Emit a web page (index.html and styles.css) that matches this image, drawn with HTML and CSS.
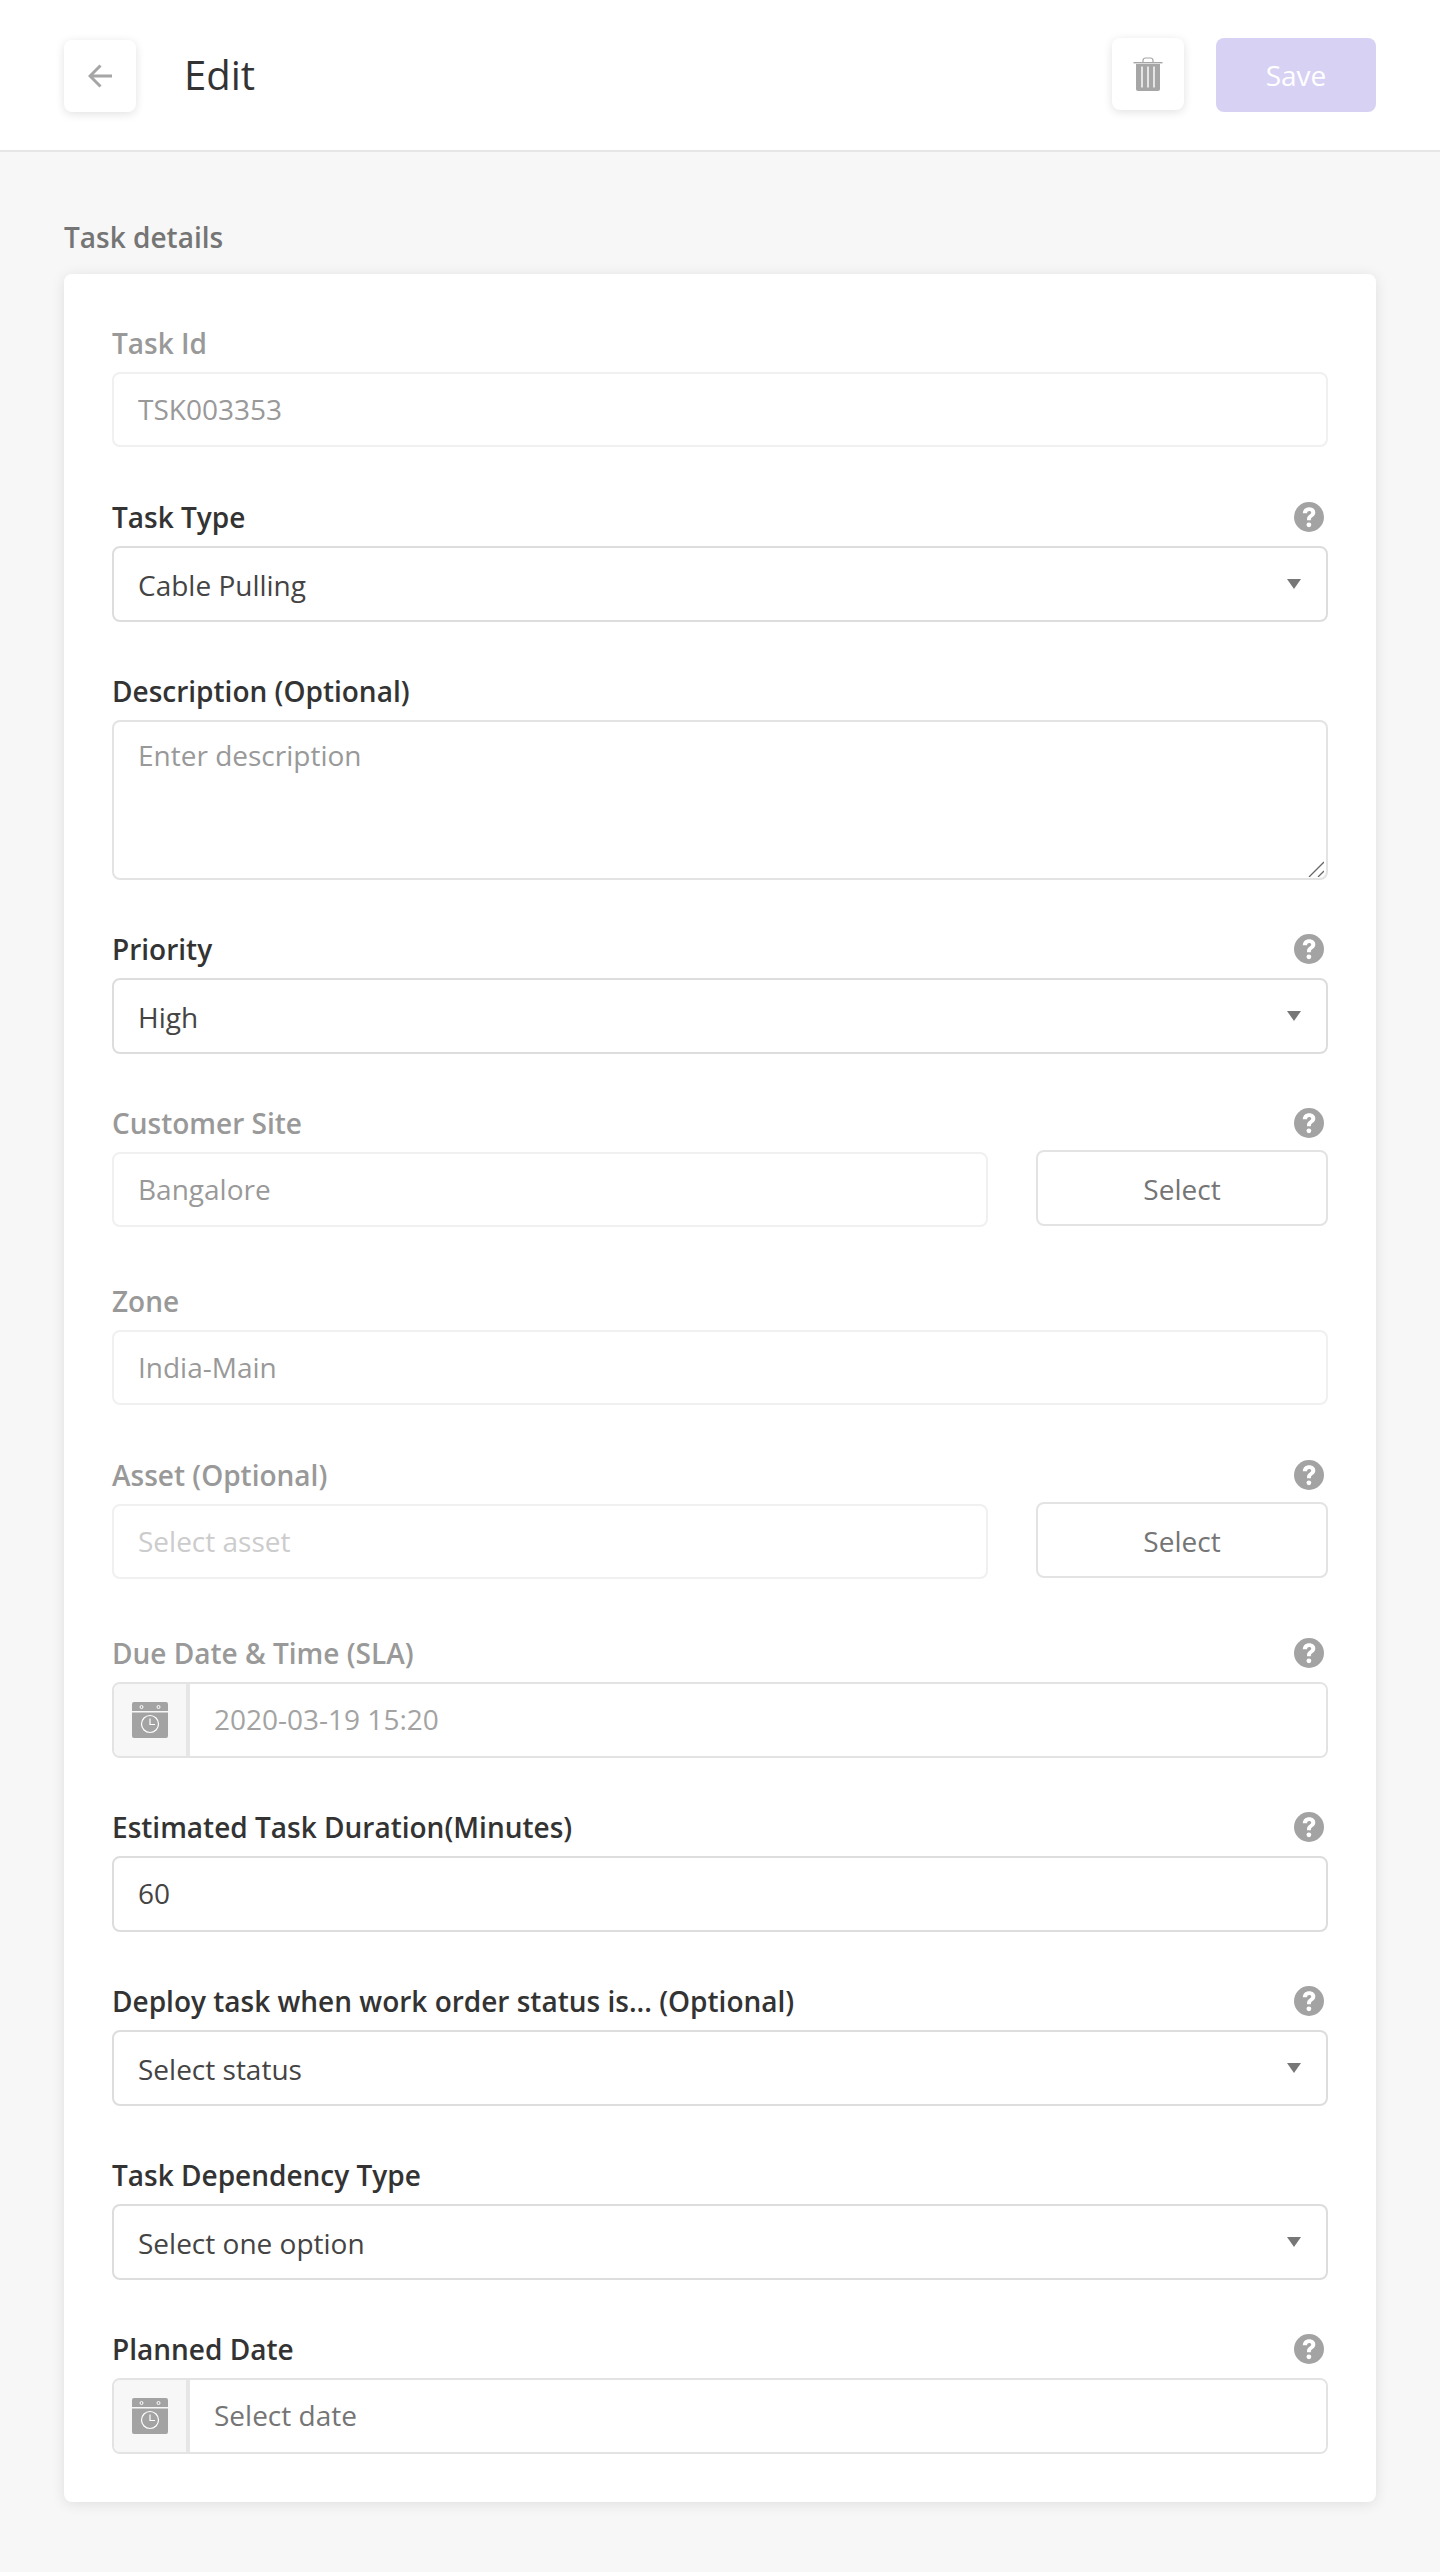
FILE: index.html
```html
<!DOCTYPE html>
<html lang="en">
<head>
<meta charset="utf-8">
<title>Edit</title>
<link rel="stylesheet" href="styles.css">
</head>
<body>
<svg class="sprites" width="0" height="0" aria-hidden="true">
  <symbol id="help" viewBox="0 0 30 30">
    <circle cx="15" cy="15" r="15" fill="#a3a3a3"/>
    <path d="M8.800 11.200c.2-3.800 2.900-5.900 6.400-5.900 3.600 0 6.100 2.100 6.100 5.100 0 2.300-1.300 3.500-2.800 4.600-1.300 1-1.600 1.500-1.600 2.700v.6h-3.900v-1c0-2.200.9-3.300 2.300-4.300 1.200-.9 1.900-1.500 1.900-2.400 0-1-.8-1.600-1.900-1.600-1.300 0-2.100.8-2.300 2.300z" fill="#fff"/>
    <circle cx="14.900" cy="22.800" r="2.400" fill="#fff"/>
  </symbol>
  <symbol id="calendar" viewBox="0 0 36 36">
    <path d="M2 0h32a2 2 0 0 1 2 2v7H0V2a2 2 0 0 1 2-2zM0 10.500h36V34a2 2 0 0 1-2 2H2a2 2 0 0 1-2-2z" fill="#a3a3a3"/>
    <circle cx="9.500" cy="5" r="1.500" fill="none" stroke="#fff" stroke-width="1"/>
    <circle cx="26.500" cy="5" r="1.500" fill="none" stroke="#fff" stroke-width="1"/>
    <circle cx="18" cy="22" r="8.500" fill="none" stroke="#fff" stroke-width="1.200"/>
    <path d="M18 16.500V22.500H23" fill="none" stroke="#fff" stroke-width="1.200"/>
  </symbol>
</svg>

<header class="topbar">
  <button class="icon-btn back-btn" type="button" aria-label="Back">
    <svg width="24" height="24" viewBox="0 0 24 24" fill="none" stroke="#a6a6a6" stroke-width="3">
      <path d="M24 12H2.500M12.500 1.500 2 12l10.500 10.500"/>
    </svg>
  </button>
  <h1 class="page-title">Edit</h1>
  <button class="icon-btn trash-btn" type="button" aria-label="Delete">
    <svg width="30" height="34" viewBox="0 0 30 34">
      <path d="M10 5V3.500A2.500 2.500 0 0 1 12.500 1h5A2.500 2.500 0 0 1 20 3.500V5" fill="none" stroke="#a6a6a6" stroke-width="1.200"/>
      <rect x="0.500" y="5" width="29" height="1.400" fill="#a6a6a6"/>
      <path d="M3 7h24v25a2 2 0 0 1-2 2H5a2 2 0 0 1-2-2z" fill="#a6a6a6"/>
      <path d="M9 9.500v21M15 9.500v21M21 9.500v21" stroke="#fff" stroke-width="1.400"/>
    </svg>
  </button>
  <button class="save-btn" type="button">Save</button>
</header>

<main class="content">
  <h2 class="section-title">Task details</h2>
  <form class="card">
    <div class="field">
      <div class="label-row is-disabled"><label>Task Id</label></div>
      <input class="control" type="text" value="TSK003353" disabled>
    </div>

    <div class="field">
      <div class="label-row"><label>Task Type</label><svg class="help"><use href="#help"/></svg></div>
      <div class="select-wrap"><select class="control"><option>Cable Pulling</option></select></div>
    </div>

    <div class="field">
      <div class="label-row"><label>Description (Optional)</label></div>
      <div class="area-wrap">
        <textarea class="control area" placeholder="Enter description"></textarea>
        <svg class="grip" width="16" height="16" viewBox="0 0 16 16" fill="none" stroke="#666" stroke-width="1.300" aria-hidden="true">
          <path d="M1 16 16 1M10 16l6-6"/>
        </svg>
      </div>
    </div>

    <div class="field">
      <div class="label-row"><label>Priority</label><svg class="help"><use href="#help"/></svg></div>
      <div class="select-wrap"><select class="control"><option>High</option></select></div>
    </div>

    <div class="field field-tall">
      <div class="label-row is-disabled"><label>Customer Site</label><svg class="help"><use href="#help"/></svg></div>
      <div class="pick-row">
        <input class="control" type="text" value="Bangalore" disabled>
        <button class="pick-btn" type="button">Select</button>
      </div>
    </div>

    <div class="field">
      <div class="label-row is-disabled"><label>Zone</label></div>
      <input class="control" type="text" value="India-Main" disabled>
    </div>

    <div class="field field-tall">
      <div class="label-row is-disabled"><label>Asset (Optional)</label><svg class="help"><use href="#help"/></svg></div>
      <div class="pick-row">
        <input class="control faint" type="text" placeholder="Select asset" disabled>
        <button class="pick-btn" type="button">Select</button>
      </div>
    </div>

    <div class="field">
      <div class="label-row is-disabled"><label>Due Date &amp; Time (SLA)</label><svg class="help"><use href="#help"/></svg></div>
      <div class="date-group">
        <span class="date-addon"><svg class="cal"><use href="#calendar"/></svg></span>
        <input class="date-input" type="text" value="2020-03-19 15:20" disabled>
      </div>
    </div>

    <div class="field">
      <div class="label-row"><label>Estimated Task Duration(Minutes)</label><svg class="help"><use href="#help"/></svg></div>
      <input class="control" type="text" value="60">
    </div>

    <div class="field">
      <div class="label-row"><label>Deploy task when work order status is... (Optional)</label><svg class="help"><use href="#help"/></svg></div>
      <div class="select-wrap"><select class="control"><option>Select status</option></select></div>
    </div>

    <div class="field">
      <div class="label-row"><label>Task Dependency Type</label></div>
      <div class="select-wrap"><select class="control"><option>Select one option</option></select></div>
    </div>

    <div class="field field-last">
      <div class="label-row"><label>Planned Date</label><svg class="help"><use href="#help"/></svg></div>
      <div class="date-group">
        <span class="date-addon"><svg class="cal"><use href="#calendar"/></svg></span>
        <input class="date-input" type="text" placeholder="Select date">
      </div>
    </div>
  </form>
</main>
</body>
</html>
```
FILE: styles.css
```css
* { box-sizing: border-box; }

html, body { margin: 0; padding: 0; }

body {
  min-height: 2572px;
  background: #f7f7f7;
  font-family: "Open Sans", "Noto Sans", sans-serif;
  font-size: 28px;
  color: #333;
}

.sprites { position: absolute; }

.topbar {
  display: flex;
  align-items: center;
  height: 152px;
  padding: 0 64px;
  background: #fff;
  border-bottom: 2px solid #e6e6e6;
}

.icon-btn {
  display: flex;
  align-items: center;
  justify-content: center;
  width: 72px;
  height: 72px;
  padding: 0;
  border: 0;
  border-radius: 8px;
  background: #fff;
  box-shadow: 0 2px 10px rgba(0, 0, 0, 0.12);
}

.back-btn { margin-top: 2px; }

.page-title {
  flex: 1;
  margin: 0 0 0 48px;
  font-size: 40px;
  font-weight: 400;
  line-height: 56px;
  color: #333;
}

.trash-btn { margin-top: -2px; }

.save-btn {
  width: 160px;
  height: 74px;
  margin-left: 32px;
  border: 0;
  border-radius: 8px;
  background: #d7d2f3;
  color: #fff;
  font: 400 28px "Open Sans", sans-serif;
}

.content { padding: 67px 64px 0; }

.section-title {
  margin: 0 0 18px;
  font-size: 28px;
  font-weight: 600;
  line-height: 37px;
  color: #757575;
}

.card {
  padding: 54px 48px 48px;
  background: #fff;
  border-radius: 8px;
  box-shadow: 0 2px 14px rgba(0, 0, 0, 0.1);
}

.field { display: flow-root; margin-bottom: 54px; }
.field-tall { margin-bottom: 58px; }
.field-last { margin-bottom: 0; }

.label-row {
  display: flex;
  align-items: center;
  justify-content: space-between;
  height: 30px;
  margin-bottom: 14px;
  padding-right: 4px;
  font-weight: 600;
  line-height: 30px;
  color: #333;
}

.label-row.is-disabled { color: #999; }

.help { width: 30px; height: 30px; flex: none; }

.control {
  display: block;
  width: 100%;
  height: 76px;
  padding: 0 24px 2px;
  border: 2px solid #ddd;
  border-radius: 8px;
  background: #fff;
  font: 400 28px "Open Sans", sans-serif;
  color: #444;
  outline: none;
}

.control:disabled {
  height: 75px;
  margin-bottom: 1px;
  border-color: #f0f0f0;
  color: #999;
  opacity: 1;
  -webkit-text-fill-color: #999;
}

.control::placeholder { color: #999; opacity: 1; }
.control.faint::placeholder { color: #ccc; -webkit-text-fill-color: #ccc; }

.area-wrap { position: relative; }

.area {
  height: 160px;
  padding: 14px 24px 16px;
  line-height: 38px;
  border-color: #e3e3e3;
  resize: none;
}

.grip {
  position: absolute;
  right: 4px;
  bottom: 3px;
  pointer-events: none;
}

select.control {
  appearance: none;
  -webkit-appearance: none;
  padding: 2px 24px 0;
}

.select-wrap { position: relative; }

.select-wrap::after {
  content: "";
  position: absolute;
  top: 33px;
  right: 27px;
  border-left: 7.500px solid transparent;
  border-right: 7.500px solid transparent;
  border-top: 10px solid #777;
  pointer-events: none;
}

.pick-row {
  display: flex;
  align-items: flex-start;
  gap: 48px;
}

.pick-row .control { flex: 1; min-width: 0; }

.pick-btn {
  flex: none;
  width: 292px;
  height: 76px;
  margin-top: -2px;
  padding: 2px 0 0;
  border: 2px solid #e3e3e3;
  border-radius: 8px;
  background: #fff;
  font: 400 28px "Open Sans", sans-serif;
  color: #757575;
}

.date-group {
  display: flex;
  height: 76px;
  border: 2px solid #e3e3e3;
  border-radius: 8px;
  overflow: hidden;
  background: #fff;
}

.date-addon {
  display: flex;
  align-items: center;
  justify-content: center;
  flex: none;
  width: 76px;
  background: #f7f7f7;
  border-right: 4px solid #e6e6e6;
}

.cal { width: 36px; height: 36px; }

.date-input {
  flex: 1;
  min-width: 0;
  padding: 0 24px 2px;
  border: 0;
  outline: none;
  background: #fff;
  font: 400 28px "Open Sans", sans-serif;
  color: #999;
}

.date-input:disabled { color: #a3a3a3; -webkit-text-fill-color: #a3a3a3; opacity: 1; }
.date-input::placeholder { color: #757575; opacity: 1; }
```
